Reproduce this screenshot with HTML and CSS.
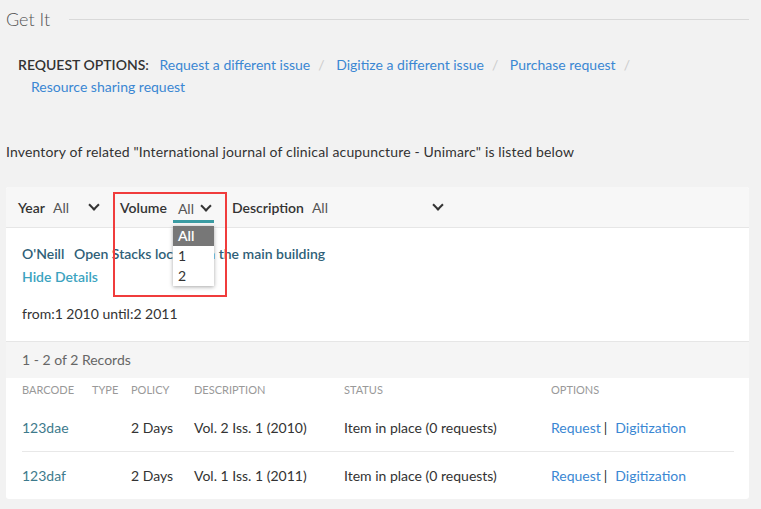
FILE: index.html
```html
<!DOCTYPE html>
<html>
<head>
  <meta charset="UTF-8">
  <title>Get It</title>
  <link rel="stylesheet" href="styles.css">
</head>
<body>
  <div class="section-title">
    <h2>Get It</h2>
    <span class="rule"></span>
  </div>

  <div class="request-options">
    <span class="label">REQUEST OPTIONS:</span>
    <a href="#">Request a different issue</a><span class="sep">/</span>
    <a href="#">Digitize a different issue</a><span class="sep">/</span>
    <a href="#">Purchase request</a><span class="sep">/</span>
    <br>
    <a href="#" class="second">Resource sharing request</a>
  </div>

  <p class="inventory">Inventory of related "International journal of clinical acupuncture - Unimarc" is listed below</p>

  <div class="card">
    <div class="filters">
      <div class="filter year">
        <span class="fname">Year</span>
        <span class="fval">All</span>
        <span class="chev"></span>
      </div>
      <div class="filter volume">
        <span class="fname">Volume</span>
        <span class="fval open">All<span class="chev"></span>
          <ul class="dropdown">
            <li class="selected">All</li>
            <li>1</li>
            <li>2</li>
          </ul>
        </span>
      </div>
      <div class="filter desc">
        <span class="fname">Description</span>
        <span class="fval">All</span>
        <span class="chev"></span>
      </div>
      <div class="highlight"></div>
    </div>

    <div class="location">
      <div class="loc-line"><b>O'Neill</b> <span>Open Stacks located in the main building</span></div>
      <a href="#" class="hide">Hide Details</a>
      <p class="range">from:1 2010 until:2 2011</p>
    </div>

    <div class="records">1 - 2 of 2 Records</div>

    <table class="items">
      <thead>
        <tr>
          <th class="c-bar">Barcode</th>
          <th class="c-type">Type</th>
          <th class="c-pol">Policy</th>
          <th class="c-desc">Description</th>
          <th class="c-stat">Status</th>
          <th class="c-opt">Options</th>
        </tr>
      </thead>
      <tbody>
        <tr>
          <td><a href="#" class="barcode">123dae</a></td>
          <td></td>
          <td>2 Days</td>
          <td>Vol. 2 Iss. 1 (2010)</td>
          <td>Item in place (0 requests)</td>
          <td><a href="#">Request</a><span class="bar">|</span><a href="#">Digitization</a></td>
        </tr>
        <tr>
          <td><a href="#" class="barcode">123daf</a></td>
          <td></td>
          <td>2 Days</td>
          <td>Vol. 1 Iss. 1 (2011)</td>
          <td>Item in place (0 requests)</td>
          <td><a href="#">Request</a><span class="bar">|</span><a href="#">Digitization</a></td>
        </tr>
      </tbody>
    </table>
  </div>
</body>
</html>
```

FILE: styles.css
```css
body {
  margin: 0;
  padding: 0 12px 0 6px;
  background: #f2f2f2;
  font-family: Lato, "Noto Sans", sans-serif;
  font-size: 14px;
  color: #333;
}
a { color: #3a87d3; text-decoration: none; }

.section-title { display: flex; align-items: center; gap: 19px; height: 38px; }
.section-title h2 { margin: 0; font-size: 18px; font-weight: 300; color: #555; }
.section-title .rule { flex: 1; height: 1px; background: #d9d9d9; }

.request-options { padding: 16px 0 0 12px; line-height: 22px; }
.request-options .label { font-weight: 600; color: #333; margin-right: 7px; }
.request-options .sep { color: #ccc; margin: 0 8px; }
.request-options .second { margin-left: 13px; }

.inventory { margin: 44px 0 0; line-height: 20px; color: #333; letter-spacing: 0.15px; }

.card { margin-top: 25px; background: #fff; border-radius: 3px; }

.filters {
  position: relative;
  display: flex;
  align-items: center;
  height: 40px;
  padding-left: 12px;
  background: #f7f7f7;
  border-bottom: 1px solid #e6e6e6;
  border-radius: 3px 3px 0 0;
}
.filter { position: relative; display: flex; align-items: center; }
.fname { font-weight: 600; color: #333; margin-right: 8px; }
.fval { color: #555; }
.chev {
  display: inline-block;
  width: 6px; height: 6px;
  border-right: 2px solid #333;
  border-bottom: 2px solid #333;
  transform: rotate(45deg);
  margin-top: -4px;
}
.year .chev { margin-left: 21px; margin-right: 22px; }
.volume { margin-right: 18px; }
.volume .fname { margin-right: 6px; }
.volume .fval.open {
  position: relative;
  display: flex; align-items: center; gap: 8px;
  padding: 0 4px 0 5px;
  height: 24px;
  border-bottom: 3px solid #3b9ca3;
  margin-top: 5px;
}
.desc .chev { margin-left: 106px; }

.dropdown {
  position: absolute;
  left: 0; top: calc(100% + 6px);
  width: 41px;
  margin: 0; padding: 0;
  list-style: none;
  background: #fff;
  box-shadow: 0 1px 4px rgba(0,0,0,0.35);
  z-index: 2;
}
.dropdown li { height: 20px; line-height: 20px; padding-left: 5px; color: #333; }
.dropdown li.selected { background: #777; color: #fff; font-weight: 600; }

.highlight {
  position: absolute;
  left: 107px; top: 5px;
  width: 110px; height: 101px;
  border: 2px solid #f03c3c;
  z-index: 3;
}

.location { padding: 15px 16px 17px; }
.loc-line { line-height: 22px; }
.loc-line b { font-weight: 600; color: #2f5f78; margin-right: 6px; }
.loc-line span { font-weight: 600; color: #2f5f78; }
.hide { display: block; margin-top: 1px; color: #3ba3c0; font-weight: 600; line-height: 22px; }
.range { margin: 16px 0 0; line-height: 20px; }

.records {
  height: 36px; line-height: 36px;
  padding-left: 16px;
  background: #f5f5f5;
  border-top: 1px solid #e6e6e6;
  color: #666;
}

.items { border-collapse: collapse; margin: 0 15px 0 16px; width: calc(100% - 31px); }
.items th {
  text-align: left;
  vertical-align: top;
  font-size: 11px; font-weight: 400;
  text-transform: uppercase;
  color: #999;
  height: 24px;
  line-height: 24px;
  padding: 0 0 2px;
}
.items td { height: 47px; padding: 0; color: #333; border-bottom: 1px solid #e8e8e8; }
.items tr:last-child td { border-bottom: 0; }
.c-bar { width: 70px; }
.c-type { width: 39px; }
.c-pol { width: 63px; }
.c-desc { width: 150px; }
.c-stat { width: 207px; }
.barcode { color: #3d7a8c; }
.bar { color: #333; margin: 0 8px 0 3px; }
```
